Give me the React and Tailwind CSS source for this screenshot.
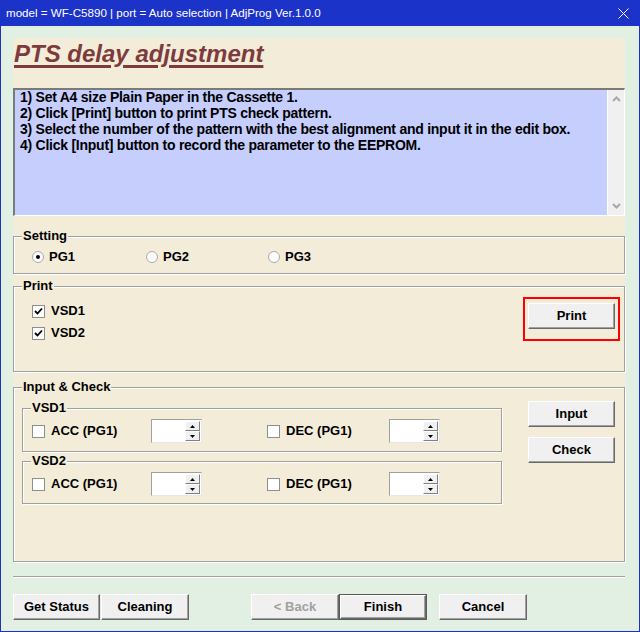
import React from 'react';

const beige = 'bg-[#f3ecd9]';

export default function App() {
  return (
    <div className="flex h-[632px] w-[640px] flex-col bg-[#1c33c9] font-['Liberation_Sans',Arial,sans-serif] text-black">
      <div className="flex h-[26px] items-center justify-between pl-[6px] pr-[11px] text-[11.6px] text-white">
        <span>model = WF-C5890 | port = Auto selection | AdjProg Ver.1.0.0</span>
        <svg width="11" height="11" viewBox="0 0 11 11" className="block">
          <path d="M0.5 0.5 L10.5 10.5 M10.5 0.5 L0.5 10.5" stroke="#fff" strokeWidth="1" />
        </svg>
      </div>

      <div className="mx-px mb-px flex flex-1 flex-col bg-[#e1f0e3] pl-[12px] pr-[14px] pt-[12px]">
        <div className={`flex h-[525px] flex-col ${beige}`}>
          <div className="h-[50px] pl-px pt-[2px]">
            <h1 className="text-[24px] font-bold italic leading-[28px] text-[#7d3b3b] underline decoration-[3px] underline-offset-[3px]">
              PTS delay adjustment
            </h1>
          </div>

          <div className="flex h-[128px] border-l-2 border-t-2 border-b border-r border-l-[#7a7a7a] border-t-[#7a7a7a] border-b-white border-r-white">
            <div className="flex-1 bg-[#c5cefd] px-[5px] text-[14px] font-bold leading-[16px] tracking-[-0.25px]">
              <div className="mt-[-1px]">
                <p>1) Set A4 size Plain Paper in the Cassette 1.</p>
                <p>2) Click [Print] button to print PTS check pattern.</p>
                <p>3) Select the number of the pattern with the best alignment and input it in the edit box.</p>
                <p>4) Click [Input] button to record the parameter to the EEPROM.</p>
              </div>
            </div>
            <div className="flex w-[17px] flex-col items-center justify-between border-l border-white bg-[#f0f0f0] py-[6px]">
              <svg width="9" height="6" viewBox="0 0 9 6"><path d="M1 5 L4.5 1.5 L8 5" fill="none" stroke="#a8a8a8" strokeWidth="2" /></svg>
              <svg width="9" height="6" viewBox="0 0 9 6"><path d="M1 1 L4.5 4.5 L8 1" fill="none" stroke="#a8a8a8" strokeWidth="2" /></svg>
            </div>
          </div>

          <Group label="Setting" className="mt-[20px] h-[38px]">
            <div className="flex pt-[12px] text-[13px] font-bold leading-[16px]">
              <Radio label="PG1" checked className="ml-[18px] w-[114px]" />
              <Radio label="PG2" className="w-[122px]" />
              <Radio label="PG3" />
            </div>
          </Group>

          <Group label="Print" className="mt-[12px] h-[86px]">
            <div className="flex justify-between pr-[4px] pt-[10px]">
              <div className="flex flex-col gap-[6px] pl-[18px] pt-[6px] text-[13px] font-bold leading-[16px]">
                <Check label="VSD1" checked />
                <Check label="VSD2" checked />
              </div>
              <div className="border-2 border-[#ff0000] px-[3px] py-[4px]">
                <Button className="w-[87px]">Print</Button>
              </div>
            </div>
          </Group>

          <Group label="Input & Check" className="mt-[15px] h-[175px]">
            <div className="flex pl-[8px] pr-[9px] pt-[20px]">
              <div className="flex flex-col">
                <Row label="VSD1" className="h-[44px]" />
                <Row label="VSD2" className="mt-[9px] h-[43px]" />
              </div>
              <div className="ml-auto mt-[-7px] flex flex-col gap-[10px]">
                <Button className="w-[87px]">Input</Button>
                <Button className="w-[87px]">Check</Button>
              </div>
            </div>
          </Group>
        </div>

        <div className="mt-[13px] h-[2px] border-t border-b border-t-[#a0a0a0] border-b-white" />

        <div className="mt-[16px] flex">
          <Button className="w-[87px]">Get Status</Button>
          <Button className="ml-px w-[88px]">Cleaning</Button>
          <Button className="ml-[62px] w-[88px]" disabled>&lt; Back</Button>
          <Button className="w-[88px]" primary>Finish</Button>
          <Button className="ml-[12px] w-[88px]">Cancel</Button>
        </div>
      </div>
    </div>
  );
}

function Group({ label, className, children }) {
  return (
    <div className={`relative border border-[#a0a0a0] shadow-[inset_1px_1px_0_#fff,1px_1px_0_#fff] ${className}`}>
      <span className={`absolute left-[8px] top-[-9px] px-px text-[13px] font-bold leading-[16px] ${beige}`}>{label}</span>
      {children}
    </div>
  );
}

function Row({ label, className }) {
  return (
    <div className={`relative w-[480px] border border-[#a0a0a0] shadow-[inset_1px_1px_0_#fff,1px_1px_0_#fff] ${className}`}>
      <span className={`absolute left-[8px] top-[-9px] px-px text-[13px] font-bold leading-[16px] ${beige}`}>{label}</span>
      <div className="flex items-center pl-[9px] pt-[10px] text-[13px] font-bold leading-[16px]">
        <Check label="ACC (PG1)" className="w-[119px]" />
        <Spinner />
        <Check label="DEC (PG1)" className="ml-[65px] w-[122px]" />
        <Spinner />
      </div>
    </div>
  );
}

function Radio({ label, checked, className = '' }) {
  return (
    <div className={`flex items-center gap-[5px] ${className}`}>
      <svg width="12" height="12" viewBox="0 0 12 12" className="block">
        <circle cx="6" cy="6" r="5.5" fill="#fff" stroke="#a9a9a9" />
        {checked && <circle cx="6" cy="6" r="2" fill="#000" />}
      </svg>
      <span>{label}</span>
    </div>
  );
}

function Check({ label, checked, className = '' }) {
  return (
    <div className={`flex items-center gap-[6px] ${className}`}>
      <div className="flex h-[13px] w-[13px] items-center justify-center border border-[#8e8e8e] bg-white">
        {checked && (
          <svg width="9" height="9" viewBox="0 0 9 9" className="block">
            <path d="M1 4 L3.5 6.5 L8 1.5" fill="none" stroke="#000" strokeWidth="1.8" />
          </svg>
        )}
      </div>
      <span>{label}</span>
    </div>
  );
}

function Spinner() {
  return (
    <div className="flex h-[24px] w-[51px] border-l border-t border-b border-r border-l-[#a0a0a0] border-t-[#a0a0a0] border-b-[#e8e8e8] border-r-[#e8e8e8] bg-white">
      <div className="flex-1" />
      <div className="flex w-[16px] flex-col py-px pr-px">
        <SpinBtn up />
        <SpinBtn />
      </div>
    </div>
  );
}

function SpinBtn({ up }) {
  return (
    <div className="flex flex-1 items-center justify-center border-l border-t border-b border-r border-l-white border-t-white border-b-[#808080] border-r-[#808080] bg-[#f0f0f0]">
      <svg width="5" height="3" viewBox="0 0 5 3" className="block">
        <path d={up ? 'M0 3 L2.5 0 L5 3 Z' : 'M0 0 L2.5 3 L5 0 Z'} fill="#000" />
      </svg>
    </div>
  );
}

function Button({ children, className = '', primary, disabled }) {
  return (
    <div className={`h-[26px] ${primary ? 'border border-[#5a5a5a]' : ''} ${className}`}>
      <div
        className={`flex h-full w-full items-center justify-center border-l border-t border-b border-r border-l-white border-t-white border-b-[#696969] border-r-[#696969] bg-[#f0f0f0] text-[13px] font-bold leading-[16px] shadow-[inset_-1px_-1px_0_#a0a0a0] ${
          disabled ? 'text-[#a0a0a0]' : 'text-black'
        }`}
      >
        {children}
      </div>
    </div>
  );
}
